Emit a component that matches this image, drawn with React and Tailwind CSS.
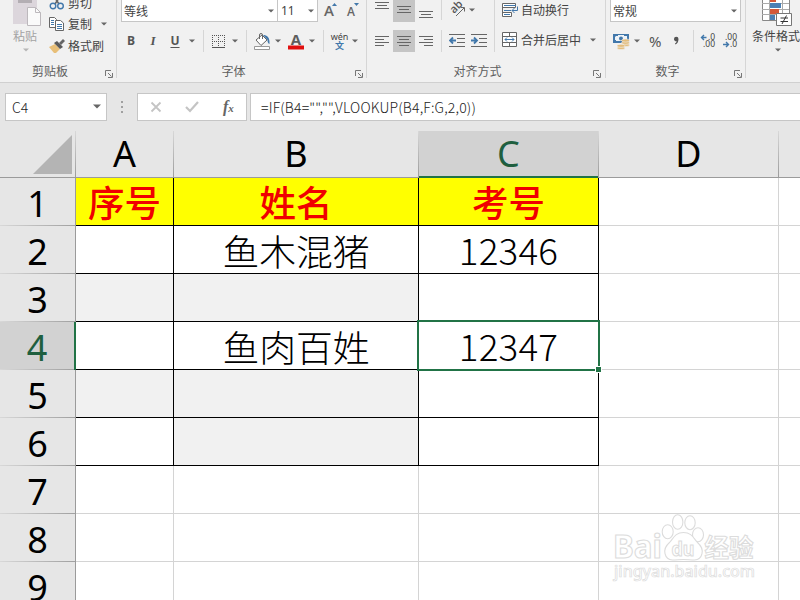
import { Fragment } from "react";

const columns = [
  { id: "A", width: "w-[98px]" },
  { id: "B", width: "w-[245px]" },
  { id: "C", width: "w-[180px]" },
  { id: "D", width: "w-[180px]" },
  { id: "", width: "w-[22px]" },
];

const rows = [
  { id: 1, cells: ["序号", "姓名", "考号"], head: true },
  { id: 2, cells: ["", "鱼木混猪", "12346"] },
  { id: 3, cells: ["", "", ""], gray: [0, 1] },
  { id: 4, cells: ["", "鱼肉百姓", "12347"] },
  { id: 5, cells: ["", "", ""], gray: [0, 1] },
  { id: 6, cells: ["", "", ""], gray: [1] },
  { id: 7 },
  { id: 8 },
  { id: 9 },
];

function Caret({ className = "", color = "#666" }) {
  return (
    <svg width="12" height="6" viewBox="0 0 12 6" className={`shrink-0 ${className}`}>
      <path d="M3 1.5h6L6 4.5z" fill={color} />
    </svg>
  );
}

function Sep({ className = "" }) {
  return <div className={`w-px shrink-0 bg-[#d6d6d6] ${className}`} />;
}

function GroupFooter({ label, width, shift = "" }) {
  return (
    <div className={`mt-auto mb-[2px] flex h-[18px] items-center ${width}`}>
      <span className={`flex-1 text-center text-[12px] leading-[18px] text-[#5e5e5e] ${shift}`}>{label}</span>
      <svg width="8" height="8" viewBox="0 0 8 8" className="mt-[6px] shrink-0" fill="none" stroke="#777">
        <path d="M.5 6V.5H6M3 3l3.5 3.5M7.5 3v4.5H3" />
      </svg>
    </div>
  );
}

function Lines({ rows, y = 0, className = "" }) {
  // every entry is [start, end] of one text line
  return (
    <svg width="14" height="22" viewBox="0 0 14 22" className={`shrink-0 ${className}`} stroke="#666">
      {rows.map(([a, b], i) => (
        <path key={i} d={`M${a} ${y + i * 3 + 0.5}H${b}`} />
      ))}
    </svg>
  );
}

function ClipboardGroup() {
  return (
    <div className="flex w-[116px] flex-col">
      <div className="flex h-[58px]">
        <div className="ml-[10px] flex w-[32px] shrink-0 flex-col items-center">
          <svg width="32" height="27" viewBox="0 0 32 27" className="shrink-0">
            <path d="M3 0h24v24H3z" fill="#dcd6dc" />
            <path d="M8 0h14v3H8z" fill="#b3aeb3" />
            <path d="M17.5 7.5h8l5 5v13h-13z" fill="#fafafa" stroke="#bcb8bc" />
            <path d="M25.5 7.5v5h5" fill="none" stroke="#bcb8bc" />
          </svg>
          <span className="mr-[2px] text-[12px] leading-[18px] text-[#a3a3a3]">粘贴</span>
          <Caret className="mt-[2px]" color="#b5b5b5" />
        </div>
        <div className="-mt-[7px] ml-[7px] flex flex-col text-[12px] text-[#444]">
          <div className="flex h-[21px] items-center">
            <svg width="16" height="16" viewBox="0 0 16 16" fill="none">
              <path d="M4 0l6 9M12 0L6 9" stroke="#666" strokeWidth="1.6" />
              <circle cx="4" cy="11" r="2.8" stroke="#4278ab" strokeWidth="1.4" />
              <circle cx="11.500" cy="11" r="2.8" stroke="#4278ab" strokeWidth="1.4" />
            </svg>
            <span className="ml-[3px]">剪切</span>
          </div>
          <div className="flex h-[23px] items-center">
            <svg width="16" height="16" viewBox="0 0 16 16" fill="#fff" stroke="#666">
              <path d="M.5 1.500h5l2 2v8h-7z" />
              <path d="M2 4.500h3M2 6.500h3M2 8.500h3" stroke="#4278ab" />
              <path d="M6.500 4.500h5l3 2.500v7.500h-8z" />
              <path d="M8 8.500h5M8 10.500h5M8 12.500h5" stroke="#4278ab" />
            </svg>
            <span className="ml-[3px]">复制</span>
            <Caret className="ml-[6px]" />
          </div>
          <div className="flex h-[25px] items-center">
            <svg width="16" height="16" viewBox="0 0 16 16">
              <path d="M0 9l6-3 5 5-4 4H5z" fill="#e8bf78" />
              <path d="M5 5l3-2 6 6-3 2z" fill="#5a5a5a" />
              <path d="M10 5l4-4 2 2-4 4z" fill="#666" />
            </svg>
            <span className="ml-[3px]">格式刷</span>
          </div>
        </div>
      </div>
      <GroupFooter label="剪贴板" width="ml-[3px] w-[110px]" shift="pr-[8px]" />
    </div>
  );
}

function FontGroup() {
  return (
    <div className="flex w-[249px] flex-col">
      <div className="flex h-[22px] text-[12px] text-[#444]">
        <div className="ml-[4px] flex w-[157px] items-center justify-between border-x border-b border-[#c6c6c6] bg-white pl-[2px]">
          <span>等线</span>
          <Caret />
        </div>
        <div className="flex w-[40px] items-center justify-between border-r border-b border-[#c6c6c6] bg-white pl-[3px]">
          <span className="font-[Noto_Sans]">11</span>
          <Caret />
        </div>
        <svg width="42" height="22" viewBox="0 0 42 22" className="ml-[5px] font-[Open_Sans] font-semibold" fill="#666">
          <text x="1" y="16" fontSize="15">A</text>
          <path d="M9 6l2.500-3 2.500 3z" fill="#4278ab" />
          <text x="24" y="16" fontSize="12">A</text>
          <path d="M31 3h5l-2.500 3z" fill="#4278ab" />
        </svg>
      </div>
      <div className="mt-2 flex h-[22px] items-center text-[12px] font-bold text-[#555]">
        <span className="ml-[3px] w-[22px] text-center font-[Open_Sans]">B</span>
        <span className="w-[22px] text-center font-[Liberation_Serif] text-[13px] italic">I</span>
        <span className="w-[22px] text-center font-[Open_Sans] underline underline-offset-2">U</span>
        <Caret />
        <Sep className="ml-[5px] h-[22px]" />
        <svg width="13" height="13" viewBox="0 0 13 13" className="ml-2" stroke="#555" fill="none">
          <path d="M0 .5h13M0 6.500h13M.5 0v12M6.500 0v12M12.500 0v12" strokeDasharray="1 1" />
          <path d="M0 12.500h13" />
        </svg>
        <Caret className="ml-1" />
        <Sep className="ml-[5px] h-[22px]" />
        <svg width="17" height="17" viewBox="0 0 17 17" className="ml-[7px]">
          <path d="M9 2c4 0 7 2 6.500 9-1.500-.5-2-2-2-4z" fill="#4278ab" />
          <path d="M2 7l6-5 5 5-6 5.500z" fill="#fff" stroke="#666" />
          <path d="M5.500 6V2a1.500 1.500 0 013 0v4" fill="none" stroke="#666" />
          <path d="M.5 13.500h15v3H.5z" fill="#fff" stroke="#999" />
        </svg>
        <Caret className="ml-px" />
        <svg width="16" height="17" viewBox="0 0 16 17" className="ml-1 overflow-visible font-[Open_Sans] font-bold">
          <text x="8" y="12" fontSize="15" textAnchor="middle" fill="#5e5e5e">A</text>
          <path d="M0 12.500h16v4H0z" fill="#e01010" />
        </svg>
        <Caret className="ml-[2px]" />
        <Sep className="ml-[5px] h-[22px]" />
        <div className="ml-[6px] flex w-[19px] flex-col items-center font-normal">
          <span className="font-[Noto_Sans] text-[9px] leading-[9px] text-[#444]">wén</span>
          <span className="text-[9px] leading-[9px] font-bold text-[#4278ab]">文</span>
        </div>
        <Caret />
      </div>
      <GroupFooter label="字体" width="w-[246px]" shift="pr-[5px]" />
    </div>
  );
}

function Indent({ out }) {
  return (
    <svg width="16" height="14" viewBox="0 0 16 14" fill="none" stroke="#666" className="shrink-0">
      <path d="M0 .5h16M8 4.500h8M8 8.500h8M0 12.500h16" />
      {out ? (
        <path d="M7 6.500H1.500M4 3.500l-3 3 3 3" stroke="#4278ab" strokeWidth="1.800" />
      ) : (
        <path d="M0 6.500h5.500M3 3.500l3 3-3 3" stroke="#4278ab" strokeWidth="1.800" />
      )}
    </svg>
  );
}

function AlignGroup() {
  return (
    <div className="flex w-[238px] flex-col">
      <div className="flex h-[52px]">
        <div className="flex w-[127px] flex-col gap-2">
          <div className="flex h-[22px]">
            <Lines rows={[[0, 14], [2, 12], [0, 14]]} y={2} className="ml-2" />
            <div className="ml-1 flex w-[22px] justify-center bg-[#c5c5c5]">
              <Lines rows={[[0, 14], [2, 12], [0, 14]]} y={6} />
            </div>
            <Lines rows={[[0, 14], [2, 12], [0, 14]]} y={11} className="ml-1" />
            <Sep className="ml-2 h-[20px]" />
            <svg
              width="17"
              height="18"
              viewBox="0 0 17 18"
              className="ml-[7px] overflow-visible font-[Open_Sans] font-semibold"
              fill="#555"
            >
              <text x="0" y="0" fontSize="11" transform="translate(5 14) rotate(-45)">ab</text>
              <path d="M7 16l8-8M11.500 7.500H15.500V11.500" fill="none" stroke="#666" />
            </svg>
            <Caret className="mt-[7px]" />
          </div>
          <div className="flex h-[22px] items-center">
            <Lines rows={[[0, 14], [0, 9], [0, 14], [0, 9]]} y={6} className="ml-2" />
            <div className="ml-1 flex w-[22px] justify-center bg-[#c5c5c5]">
              <Lines rows={[[0, 14], [2, 12], [0, 14], [2, 12]]} y={6} />
            </div>
            <Lines rows={[[0, 14], [5, 14], [0, 14], [5, 14]]} y={6} className="ml-1" />
            <Sep className="ml-2 h-[22px]" />
            <div className="ml-[7px] flex gap-[6px]">
              <Indent out />
              <Indent />
            </div>
          </div>
        </div>
        <Sep className="h-[52px]" />
        <div className="ml-[7px] flex flex-col gap-[9px] text-[12px] text-[#444]">
          <div className="flex h-[20px] items-center">
            <svg width="16" height="16" viewBox="0 0 16 16" fill="#fff" stroke="#666">
              <path d="M.5 1.500v13M.5 1.500h13v4H.5M.5 10.500h9v4h-9" />
              <path d="M2 3.500h12M2 8.500h7M2 12.500h6" stroke="#4278ab" />
              <path d="M15.500 4.500v4H10M12.500 6L10 8.500l2.500 2.500" stroke="#4278ab" fill="none" />
            </svg>
            <span className="ml-[3px]">自动换行</span>
          </div>
          <div className="flex h-[24px] items-center">
            <svg width="16" height="16" viewBox="0 0 16 16" fill="#fff" stroke="#666">
              <path d="M.5.5h14v14H.5zM.5 4.500h14M.5 10.500h14M7.500.5v4M7.500 10.500v4" />
              <path d="M3 7.500h9M5 5.500l-2 2 2 2M10 5.500l2 2-2 2" stroke="#4278ab" fill="none" />
            </svg>
            <span className="ml-[3px]">合并后居中</span>
            <Caret className="ml-[6px]" />
          </div>
        </div>
      </div>
      <GroupFooter label="对齐方式" width="w-[234px]" shift="pr-[5px]" />
    </div>
  );
}

function NumberGroup() {
  return (
    <div className="flex w-[139px] flex-col text-[#444]">
      <div className="ml-1 flex h-[22px] w-[131px] items-center justify-between border-x border-b border-[#c6c6c6] bg-white pl-[2px] text-[12px]">
        <span>常规</span>
        <Caret />
      </div>
      <div className="mt-2 flex h-[22px] items-center">
        <svg width="17" height="17" viewBox="0 0 17 17" className="ml-[7px]">
          <path d="M0 1h16v9H0z" fill="#4278ab" />
          <path d="M3 3h2v-1h6v1h3v5H3V7H2V4z" fill="#eef3f8" />
          <circle cx="8" cy="5.500" r="2" fill="#4278ab" />
          <g fill="#e3bd7d" stroke="#f1f1f1" strokeWidth=".6">
            <ellipse cx="12.500" cy="12" rx="4" ry="1.600" />
            <ellipse cx="12.500" cy="9.800" rx="4" ry="1.600" />
            <ellipse cx="12.500" cy="7.500" rx="4" ry="1.600" />
            <ellipse cx="8" cy="15" rx="4" ry="1.600" />
            <ellipse cx="8" cy="12.800" rx="4" ry="1.600" />
          </g>
        </svg>
        <Caret className="ml-px" />
        <span className="ml-[6px] w-[14px] font-[Noto_Sans] text-[15px] text-[#555]">%</span>
        <svg width="8" height="10" viewBox="0 0 8 10" className="mb-px ml-[10px]">
          <path d="M1 3a2.200 2.200 0 114.500 0c0 3-1.500 5-3 5.500L2 7.500c1-.5 1.500-1.300 1.600-2.200A2.200 2.200 0 011 3z" fill="#555" />
        </svg>
        <Sep className="ml-[12px] h-[22px]" />
        <svg width="40" height="16" viewBox="0 0 40 16" className="ml-[6px] overflow-visible font-[Noto_Sans]" fill="#444" fontSize="8.500">
          <text x="8" y="7">.0</text>
          <text x="3" y="14">.00</text>
          <path d="M6.500 4.500H1.500M4 2L1.500 4.500 4 7" fill="none" stroke="#4278ab" strokeWidth="1.400" />
          <text x="25" y="7">.00</text>
          <text x="30" y="14">.0</text>
          <path d="M23 11.500h5M26 9l2.500 2.500L26 14" fill="none" stroke="#4278ab" strokeWidth="1.400" />
        </svg>
      </div>
      <GroupFooter label="数字" width="w-[136px]" shift="pr-[5px]" />
    </div>
  );
}

function StyleGroup() {
  return (
    <div className="flex w-[54px] flex-col overflow-hidden">
      <svg width="32" height="27" viewBox="0 0 32 27" className="ml-[15px] shrink-0">
        <path d="M1.500-1v21.500h27V-1" fill="#fff" stroke="#888" />
        <path d="M1 3.500h27M1 9.500h27M1 14.500h27M8.500 0v20M21.500 0v20" stroke="#aaa" fill="none" />
        <path d="M9 0h6v2H9zM9 9h9v5H9z" fill="#d4593a" />
        <path d="M9 3h11v5H9zM9 15h5v5H9z" fill="#4b80b5" />
        <path d="M15.500 13.500h15v12h-15z" fill="#fff" stroke="#777" />
        <path d="M19.500 18h7.500M19.500 21.500h7.500M21 24l4.500-8.500" stroke="#333" fill="none" />
      </svg>
      <span className="ml-[6px] w-[60px] text-[12px] leading-[18px] whitespace-nowrap text-[#444]">条件格式</span>
      <Caret className="mt-[2px] ml-[26px]" />
    </div>
  );
}

function Ribbon() {
  const groups = [ClipboardGroup, FontGroup, AlignGroup, NumberGroup, StyleGroup];
  return (
    <div className="flex h-[83px] shrink-0 overflow-hidden border-b border-[#d0d0d0] bg-[#f1f1f1]">
      {groups.map((Group, i) => (
        <Fragment key={i}>
          {i > 0 && <Sep className="h-[78px]" />}
          <Group />
        </Fragment>
      ))}
    </div>
  );
}

function FormulaBar() {
  return (
    <div className="flex h-[48px] shrink-0 pt-[10px] pl-[5px] font-['Noto_Sans_CJK_SC',sans-serif] text-[14px] font-light text-[#222]">
      <div className="flex h-[28px] w-[102px] items-center justify-between border border-[#c6c6c6] bg-white pr-[3px] pl-[6px]">
        <span>C4</span>
        <svg width="12" height="6" viewBox="0 0 12 6">
          <path d="M2 .5h8L6 4.500z" fill="#666" />
        </svg>
      </div>
      <div className="flex h-[28px] w-[30px] flex-col items-center justify-center gap-[3px]">
        <i className="h-[2px] w-[2px] bg-[#a0a0a0]" />
        <i className="h-[2px] w-[2px] bg-[#a0a0a0]" />
        <i className="h-[2px] w-[2px] bg-[#a0a0a0]" />
      </div>
      <div className="flex h-[28px] w-[110px] items-center border border-[#c6c6c6] bg-white">
        <svg width="12" height="12" viewBox="0 0 12 12" className="ml-[12px]" fill="none" stroke="#c4c4c4" strokeWidth="1.800">
          <path d="M1.500 1.500l9 9M10.500 1.500l-9 9" />
        </svg>
        <svg width="14" height="12" viewBox="0 0 14 12" className="ml-[23px]" fill="none" stroke="#c4c4c4" strokeWidth="2.200">
          <path d="M1 6l4 4 8-9" />
        </svg>
        <span className="ml-[24px] font-[Liberation_Serif] text-[16px] leading-none font-bold text-[#666] italic">
          f<span className="text-[11px]">x</span>
        </span>
      </div>
      <div className="ml-[3px] flex h-[28px] flex-1 items-center border-y border-l border-[#c6c6c6] bg-white pl-[10px] tracking-[0.17px]">
        {'=IF(B4="","",VLOOKUP(B4,F:G,2,0))'}
      </div>
    </div>
  );
}

function ColumnHeaders() {
  return (
    <div className="flex h-[47px] shrink-0 font-[Noto_Sans] text-[36px] leading-[46px] text-black">
      <div className="flex w-[75px] shrink-0 justify-end border-b border-[#9b9b9b] pt-[4px] pr-[3px]">
        <svg width="39" height="39" viewBox="0 0 39 39">
          <path d="M39 0v39H0z" fill="#b4b4b4" />
        </svg>
      </div>
      <div className="w-px shrink-0 bg-linear-to-b from-[#d8d8d8] to-[#9b9b9b]" />
      {columns.map((c, i) => (
        <div key={i} className={`flex shrink-0 ${c.width}`}>
          <div
            className={`flex-1 text-center ${
              c.id === "C" ? "border-b-2 border-[#217346] bg-[#d2d2d2] text-[#1f5f3f]" : "border-b border-[#9b9b9b]"
            }`}
          >
            {c.id}
          </div>
          <div className="w-px bg-linear-to-b from-[#d8d8d8] to-[#9b9b9b]" />
        </div>
      ))}
    </div>
  );
}

function Cell({ row, index, width }) {
  const inTable = row.cells && index < 3;
  const active = row.id === 4 && index === 2;
  let border = "border-[#d4d4d4]";
  if (inTable) border = "border-black";
  let bg = "bg-white";
  if (inTable && row.head) bg = "bg-[#ffff00]";
  if (inTable && row.gray?.includes(index)) bg = "bg-[#f1f1f1]";

  return (
    <div
      className={`relative flex h-12 shrink-0 items-center justify-center border-r border-b leading-none ${width} ${border} ${bg} ${
        row.head ? "text-[36.5px] font-medium text-[#f00000]" : "text-[36.8px] font-light text-black"
      }`}
    >
      <span className={index === 2 && !row.head ? "pb-px tracking-[0.2px]" : "pt-[2px]"}>
        {inTable ? row.cells[index] : ""}
      </span>
      {active && (
        <div className="absolute -top-[2px] -right-[2px] -bottom-[2px] -left-[2px] z-10 border-2 border-[#217346]">
          <div className="absolute -right-[4px] -bottom-[4px] h-[7px] w-[7px] border border-white bg-[#217346]" />
        </div>
      )}
    </div>
  );
}

function Watermark() {
  return (
    <svg
      width="150"
      height="76"
      viewBox="0 0 150 76"
      className="absolute top-[512px] left-[610px] z-20 font-[Noto_Sans] font-bold"
      fill="#fff"
      stroke="#dcdcdc"
      strokeWidth="1.100"
    >
      <text x="3" y="46" fontSize="32" textLength="49" lengthAdjust="spacingAndGlyphs">Bai</text>
      <ellipse cx="57.700" cy="19.700" rx="5.500" ry="7" />
      <ellipse cx="67.700" cy="10" rx="5.200" ry="7.300" />
      <ellipse cx="80" cy="10.700" rx="5.200" ry="7" />
      <ellipse cx="88" cy="22.700" rx="5.500" ry="7" />
      <path d="M73.500 20.500c8 0 10 5.500 14 10 8 7 5 17-3 17.500-4 0-7-.5-11-.5s-7 .5-11 .5c-8-.5-11-10.500-3-17.500 4-4.500 6-10 14-10z" />
      <text x="61.500" y="44" fontSize="20" textLength="23" lengthAdjust="spacingAndGlyphs">du</text>
      <text x="94.500" y="45" fontSize="25" fontFamily="Noto Sans CJK SC" textLength="49" lengthAdjust="spacingAndGlyphs">
        经验
      </text>
      <text x="4" y="65" fontSize="15.500" fontWeight="500" strokeWidth=".7" textLength="141" lengthAdjust="spacingAndGlyphs">
        jingyan.baidu.com
      </text>
    </svg>
  );
}

export default function App() {
  return (
    <div className="relative flex h-[600px] w-[800px] flex-col overflow-hidden bg-[#e6e6e6] font-['Noto_Sans_CJK_SC',sans-serif]">
      <Ribbon />
      <FormulaBar />
      <ColumnHeaders />
      <div className="flex flex-col">
        {rows.map((row) => (
          <div key={row.id} className="flex shrink-0">
            <div
              className={`h-12 w-[76px] shrink-0 border-r font-[Noto_Sans] text-[36px] ${
                row.id === 4 ? "border-r-2 border-[#217346] bg-[#d2d2d2] text-[#1f5f3f]" : "border-[#9b9b9b] text-black"
              }`}
            >
              <div className="h-[47px] text-center leading-[51px]">{row.id}</div>
              <div className="h-px bg-linear-to-r from-[#d8d8d8] to-[#a0a0a0]" />
            </div>
            {columns.map((c, i) => (
              <Cell key={i} row={row} index={i} width={c.width} />
            ))}
          </div>
        ))}
      </div>
      <Watermark />
    </div>
  );
}
